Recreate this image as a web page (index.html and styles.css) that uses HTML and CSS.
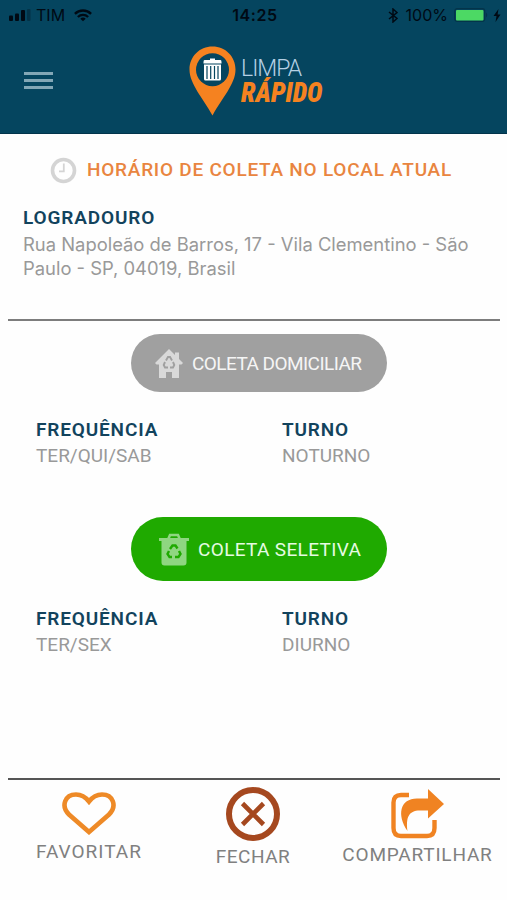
FILE: index.html
```html
<!DOCTYPE html>
<html lang="pt-BR">
<head>
    <meta charset="UTF-8">
    <meta name="viewport" content="width=device-width, initial-scale=1.0">
    <title>Limpa Rápido</title>
    <link rel="stylesheet" href="styles.css">
</head>
<body>

    <header>
        <div class="status-bar">
            <div class="status-left">
                <svg class="signal" width="22" height="12" viewBox="0 0 22 12">
                    <rect x="0" y="6.5" width="4" height="5.5" rx="1"/>
                    <rect x="6" y="4.5" width="4" height="7.5" rx="1"/>
                    <rect x="12" y="1" width="4" height="11" rx="1"/>
                    <rect x="18" y="0" width="3.5" height="12" rx="1" opacity=".3"/>
                </svg>
                <span class="carrier">TIM</span>
                <svg width="18" height="13" viewBox="0 0 20 14" fill="none" stroke="#000a14" stroke-width="2.6">
                    <path d="M1 5.2 C6 .2 14 .2 19 5.2"/>
                    <path d="M4.3 8.7 C7.5 5.6 12.5 5.6 15.7 8.7"/>
                    <path d="M10 13.5 L7 10.5 C8.7 8.9 11.3 8.9 13 10.5 Z" fill="#000a14" stroke="none"/>
                </svg>
            </div>
            <span class="time">14:25</span>
            <div class="status-right">
                <svg width="10" height="15" viewBox="0 0 10 15" fill="none" stroke="#000a14" stroke-width="1.5">
                    <path d="M1 4 L9 10.5 L5 14 V1 L9 4.5 L1 11"/>
                </svg>
                <span class="percent">100%</span>
                <svg width="34" height="14" viewBox="0 0 34 14">
                    <rect x=".7" y=".7" width="30" height="12.6" rx="2.5" fill="none" stroke="#04344a" stroke-width="1.2"/>
                    <rect x="2" y="2" width="27.5" height="10.5" rx="1" fill="#4cd964"/>
                    <path d="M32 4.5 Q34.5 7 32 9.5 Z" fill="#04344a"/>
                </svg>
                <svg class="bolt" width="8" height="13" viewBox="0 0 8 13">
                    <path d="M5.5 0 L.5 7 H3.5 L2.5 13 L7.5 5.5 H4.6 Z"/>
                </svg>
            </div>
        </div>
        <div class="nav">
            <div class="menu">
                <span></span>
                <span></span>
                <span></span>
            </div>
            <div class="logo">
                <svg width="47" height="70" viewBox="0 0 47 70">
                    <path d="M23.5 .5 C10.5 .5 .5 10.5 .5 23.5 C.5 38 14 52 23.5 69.5 C33 52 46.5 38 46.5 23.5 C46.5 10.5 36.5 .5 23.5 .5 Z" fill="#f58220"/>
                    <circle cx="23.5" cy="23.7" r="16.5" fill="#05455f"/>
                    <path d="M21 12.5 H26 V14 H31.5 Q32.5 14 32.5 16 V17.5 H14.5 V16 Q14.5 14 15.5 14 H21 Z" fill="#fff"/>
                    <path d="M15 18.5 H32 V33 Q32 34.5 30.5 34.5 H16.5 Q15 34.5 15 33 Z" fill="#fff"/>
                    <path d="M18 20 V33 M21.7 20 V33 M25.5 20 V33 M29 20 V33" stroke="#05455f" stroke-width="1.2"/>
                </svg>
                <div class="logo-text">
                    <span class="logo-top">LIMPA</span>
                    <span class="logo-bottom">RÁPIDO</span>
                </div>
            </div>
        </div>
    </header>

    <main>
        <h1>
            <svg width="27" height="27" viewBox="0 0 27 27" fill="none">
                <circle cx="13.5" cy="13.5" r="11" stroke="#d4d4d4" stroke-width="3.6"/>
                <path d="M13.8 6.5 V14.3 H9" stroke="#d4d4d4" stroke-width="1.8"/>
            </svg>
            <span>HORÁRIO DE COLETA NO LOCAL ATUAL</span>
        </h1>

        <section class="address">
            <h2>LOGRADOURO</h2>
            <p>Rua Napoleão de Barros, 17 - Vila Clementino - São Paulo - SP, 04019, Brasil</p>
        </section>

        <!-- Coleta domiciliar -->
        <div class="pill pill-gray">
            <svg width="28" height="29" viewBox="0 0 28 29">
                <path d="M14 0 L20 6 V3.5 H24 V10 L28 14 L26.5 15.5 H24 V29 H17 V23 H11 V29 H4 V15.5 H1.5 L0 14 Z" fill="#d9d9d9"/>
                <g fill="none" stroke="#a0a0a0" stroke-width="1.9">
                    <path d="M11 11.5 L13 8 H15 L17 11.5"/>
                    <path d="M18 13 L19.3 16 L18 18.5 H15"/>
                    <path d="M13 18.5 H10 L8.7 16 L10 13"/>
                </g>
            </svg>
            <span>COLETA DOMICILIAR</span>
        </div>
        <div class="info">
            <div>
                <h2>FREQUÊNCIA</h2>
                <p>TER/QUI/SAB</p>
            </div>
            <div>
                <h2>TURNO</h2>
                <p>NOTURNO</p>
            </div>
        </div>

        <!-- Coleta seletiva -->
        <div class="pill pill-green">
            <svg width="30" height="33" viewBox="0 0 30 33">
                <path d="M9.5 5.5 L11 2 H19 L20.5 5.5" fill="none" stroke="#8fd681" stroke-width="2.6"/>
                <path d="M0 5 H30 V8 H27.5 V29.5 Q27.5 32.5 24.5 32.5 H5.5 Q2.5 32.5 2.5 29.5 V8 H0 Z" fill="#8fd681"/>
                <g fill="none" stroke="#1faa00" stroke-width="2.4">
                    <path d="M11 16 L13.5 12.5 H16.5 L18.5 15.5"/>
                    <path d="M20 18 L21.5 21 L19.5 24 H16"/>
                    <path d="M13 24 H10.5 L8.5 21 L10 18"/>
                </g>
            </svg>
            <span>COLETA SELETIVA</span>
        </div>
        <div class="info">
            <div>
                <h2>FREQUÊNCIA</h2>
                <p>TER/SEX</p>
            </div>
            <div>
                <h2>TURNO</h2>
                <p>DIURNO</p>
            </div>
        </div>
    </main>

    <footer>
        <div class="action favorite">
            <svg width="54" height="43" viewBox="0 0 54 43">
                <path d="M27 40 L7 22.5 C-1.5 14 3 2.5 14 2.5 C20 2.5 23.5 5 27 9.5 C30.5 5 34 2.5 40 2.5 C51 2.5 55.5 14 47 22.5 Z" fill="none" stroke="#ee8a27" stroke-width="4.6"/>
            </svg>
            <span>FAVORITAR</span>
        </div>
        <div class="action close">
            <svg width="54" height="54" viewBox="0 0 54 54" fill="none" stroke="#a5481f">
                <circle cx="27" cy="27" r="24" stroke-width="6"/>
                <path d="M16.5 16.5 L37.5 37.5 M37.5 16.5 L16.5 37.5" stroke-width="4.6"/>
            </svg>
            <span>FECHAR</span>
        </div>
        <div class="action share">
            <svg width="54" height="50" viewBox="0 0 54 50">
                <path d="M18 6 H10 Q2.500 6 2.500 13.500 V39 Q2.500 47 10 47 H36 Q43.500 47 43.500 39 V31" fill="none" stroke="#f08322" stroke-width="4.4"/>
                <path d="M37 0 L53 15 L37 29.5 V21.5 H29 C17 21.5 15 29 16.5 42 C5.5 26 9 9.5 26 9.5 H37 Z" fill="#f08322"/>
            </svg>
            <span>COMPARTILHAR</span>
        </div>
    </footer>

</body>
</html>
```

FILE: styles.css
```css
* {
    box-sizing: border-box;
}
body {
    margin: 0;
    height: 900px;
    display: flex;
    flex-direction: column;
    background: #fefefe;
    font-family: Roboto, sans-serif;
    color: #999;
}
svg {
    display: block;
    flex-shrink: 0;
}
h1, h2, p {
    margin: 0;
    font-weight: 400;
}
/* Header */
header {
    height: 134px;
    background: #05455f;
    border-bottom: 1px solid #02344b;
}
.status-bar {
    display: grid;
    grid-template-columns: 1fr auto 1fr;
    align-items: center;
    height: 30px;
    padding: 0 6px 0 9px;
    font-family: Inter, sans-serif;
    font-size: 16px;
    color: #000a14;
}
.status-left,
.status-right {
    display: flex;
    align-items: center;
}
.status-right {
    justify-content: flex-end;
}
.signal,
.bolt {
    fill: #000a14;
}
.carrier {
    margin: 0 9px 0 5px;
}
.time {
    font-weight: 600;
    letter-spacing: 0.6px;
}
.percent {
    margin: 0 6px 0 8px;
}
.bolt {
    margin-left: 5px;
}
.nav {
    display: flex;
    align-items: flex-start;
    padding: 16px 24px 0;
}
.menu {
    display: flex;
    flex-direction: column;
    gap: 4px;
    width: 29px;
    margin: 26px 136px 0 0;
}
.menu span {
    height: 3px;
    background: #83a7b6;
}
.logo {
    display: flex;
    gap: 5px;
}
.logo-text {
    display: flex;
    flex-direction: column;
    padding-top: 10px;
    white-space: nowrap;
}
.logo-top {
    font-size: 23px;
    font-weight: 300;
    line-height: 25px;
    letter-spacing: -1px;
    color: #b5d0e4;
}
.logo-bottom {
    font-family: "Roboto Condensed", Roboto, sans-serif;
    font-size: 28px;
    font-weight: 900;
    font-style: italic;
    line-height: 24px;
    color: #f58220;
    transform: scaleX(0.94);
    transform-origin: left;
}
/* Content */
main {
    flex: 1;
}
h1 {
    display: flex;
    align-items: center;
    gap: 10px;
    height: 70px;
    padding: 2px 0 0 50px;
    font-size: 19px;
    font-weight: 500;
    letter-spacing: 0.75px;
    color: #e98540;
    white-space: nowrap;
}
h1 span {
    margin-top: -2px;
}
h2 {
    font-size: 19px;
    font-weight: 600;
    line-height: 26px;
    letter-spacing: 0.85px;
    color: #12435d;
}
.address {
    height: 117px;
    margin: 0 7px 0 8px;
    padding: 1px 15px 0;
    border-bottom: 2px solid #7d7d7d;
}
.address p {
    width: 456px;
    padding-top: 1px;
    font-family: Inter, sans-serif;
    font-size: 18.4px;
    line-height: 24px;
}
.pill {
    display: flex;
    align-items: center;
    width: 256px;
    margin-left: 131px;
    border-radius: 32px;
    font-size: 19px;
    white-space: nowrap;
}
.pill-gray {
    height: 58px;
    margin-top: 13px;
    padding-left: 24px;
    gap: 9px;
    background: #a0a0a0;
    color: #f5f5f5;
    letter-spacing: -0.55px;
}
.pill-green {
    height: 64px;
    margin-top: 48px;
    padding-left: 28px;
    gap: 9px;
    background: #1faa00;
    color: #e6fbe2;
    letter-spacing: 0.35px;
}
.info {
    display: grid;
    grid-template-columns: 246px 1fr;
    padding: 25px 0 0 36px;
}
.info p {
    font-size: 19px;
    line-height: 26px;
}
/* Bottom actions */
footer {
    display: grid;
    grid-template-columns: 162px 166px 163px;
    height: 122px;
    margin: 0 7px 0 8px;
    border-top: 2px solid #555;
}
.action {
    display: flex;
    flex-direction: column;
    align-items: center;
    font-size: 19px;
    line-height: 24px;
    letter-spacing: 0.8px;
    color: #808080;
    white-space: nowrap;
}
.favorite {
    padding-top: 12px;
    gap: 5px;
    letter-spacing: 1px;
}
.close {
    padding-top: 7px;
    gap: 4px;
    letter-spacing: 0.5px;
}
.share {
    padding-top: 9px;
    gap: 4px;
}
```
